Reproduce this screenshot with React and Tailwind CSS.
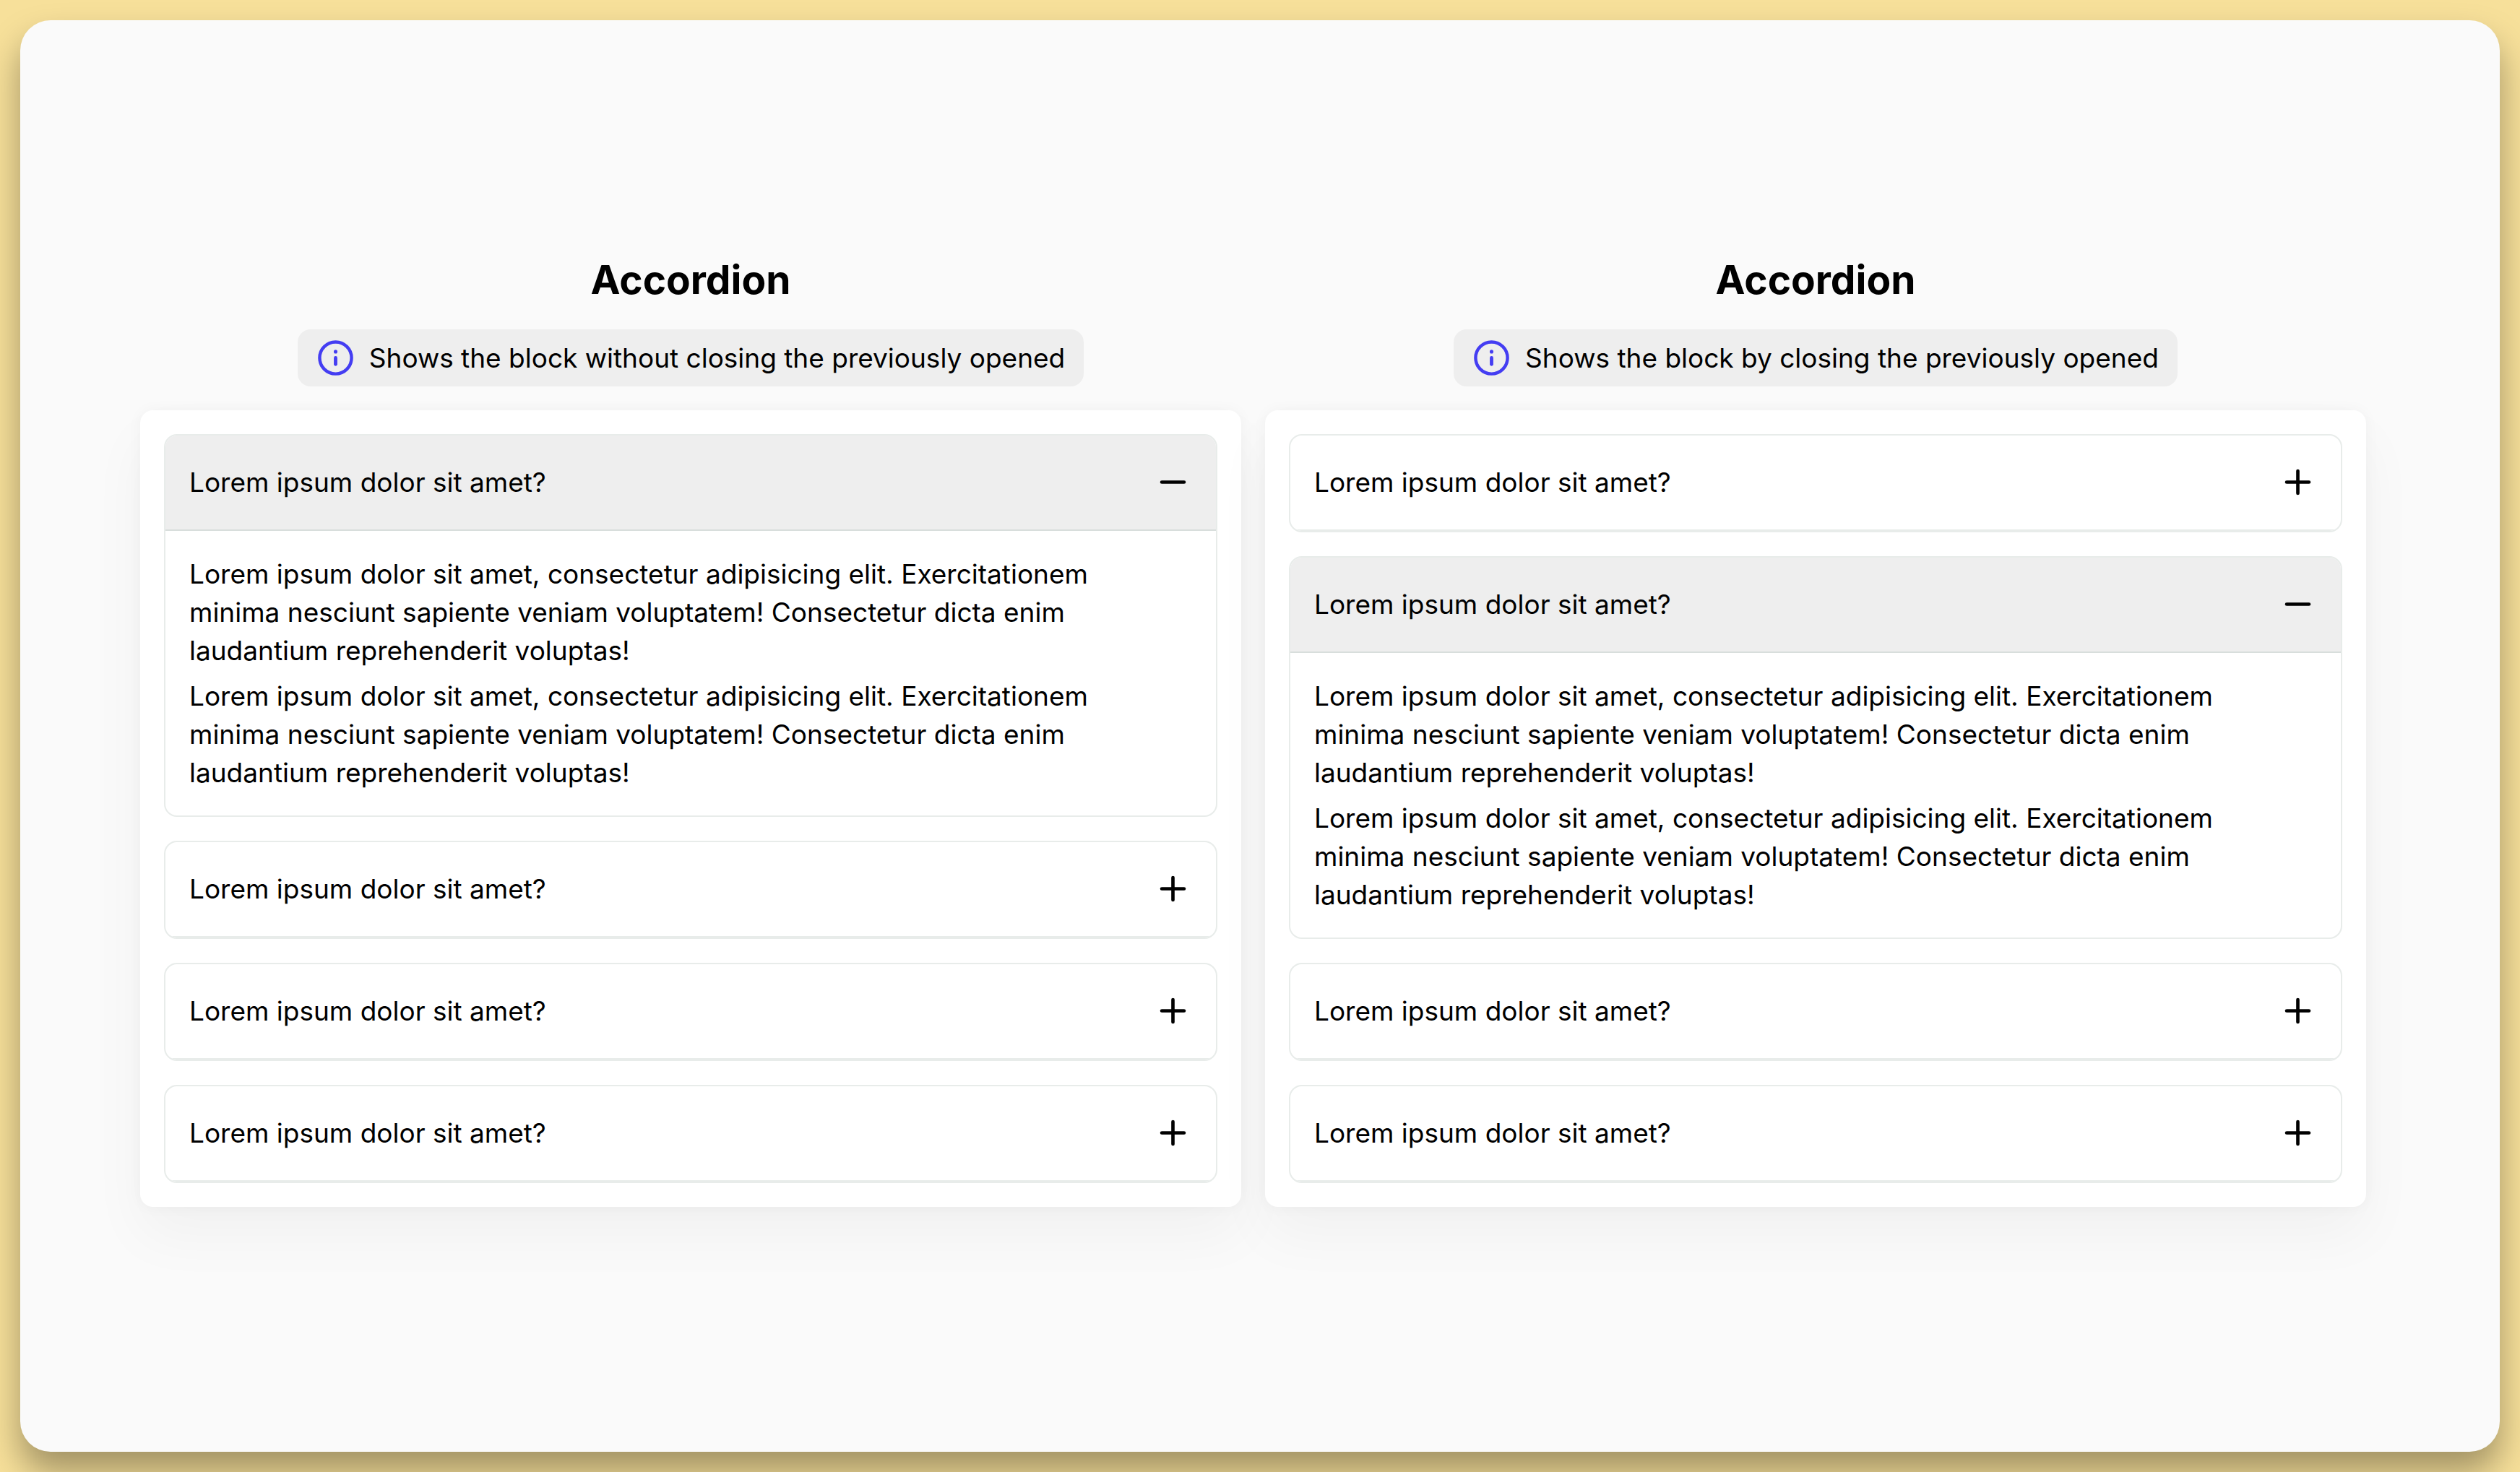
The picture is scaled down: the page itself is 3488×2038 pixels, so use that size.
import { useState } from "react";

const PARAGRAPH =
  "Lorem ipsum dolor sit amet, consectetur adipisicing elit. Exercitationem minima nesciunt sapiente veniam voluptatem! Consectetur dicta enim laudantium reprehenderit voluptas!";

const ITEMS = [0, 1, 2, 3];

function InfoIcon() {
  return (
    <svg viewBox="0 0 24 24" fill="none" className="size-[53px] shrink-0 text-[#443df2]" aria-hidden="true">
      <circle cx="12" cy="12" r="10" stroke="currentColor" strokeWidth="2" />
      <path d="M12 12v4" stroke="currentColor" strokeWidth="2.2" strokeLinecap="round" />
      <circle cx="12" cy="8.1" r="1.15" fill="currentColor" />
    </svg>
  );
}

function ToggleIcon({ open }) {
  return (
    <svg
      viewBox="0 0 24 24"
      fill="none"
      stroke="currentColor"
      strokeWidth="2.1"
      strokeLinecap="round"
      className="size-[53px] shrink-0"
      aria-hidden="true"
    >
      <path d="M5 12h14" />
      {!open && <path d="M12 5v14" />}
    </svg>
  );
}

function AccordionItem({ id, open, onToggle }) {
  return (
    <div className="overflow-hidden rounded-[18px] border-2 border-[#e8ecea]">
      <h3>
        <button
          type="button"
          id={`${id}-header`}
          aria-expanded={open}
          aria-controls={`${id}-panel`}
          onClick={onToggle}
          className={
            open
              ? "flex h-[132px] w-full items-center justify-between border-b-2 border-[#d8dedc] bg-[#eeeeee] px-[33px] text-left"
              : "flex h-[132px] w-full items-center justify-between border-b-2 border-[#e8ecea] px-[33px] text-left"
          }
        >
          <span>Lorem ipsum dolor sit amet?</span>
          <ToggleIcon open={open} />
        </button>
      </h3>
      {open && (
        <div
          id={`${id}-panel`}
          role="region"
          aria-labelledby={`${id}-header`}
          className="flex flex-col gap-[10px] py-[33px] pr-[100px] pl-[33px]"
        >
          <p>{PARAGRAPH}</p>
          <p>{PARAGRAPH}</p>
        </div>
      )}
    </div>
  );
}

function Accordion({ name, hint, initial, single }) {
  const [opened, setOpened] = useState([initial]);

  const toggle = (i) =>
    setOpened((current) => {
      if (current.includes(i)) return current.filter((n) => n !== i);
      return single ? [i] : [...current, i];
    });

  return (
    <section className="flex min-w-0 flex-1 flex-col items-center">
      <h2 className="text-[55px] leading-[80px] font-bold">Accordion</h2>
      <p className="mt-[29px] flex items-center gap-[20px] rounded-[18px] bg-[#eeeeee] px-[26px] py-[13px]">
        <InfoIcon />
        <span>{hint}</span>
      </p>
      <div className="mt-[33px] flex w-full flex-col gap-[33px] rounded-[18px] bg-white p-[33px] shadow-[0_40px_80px_rgba(0,0,0,0.04),0_0_20px_rgba(0,0,0,0.04)]">
        {ITEMS.map((i) => (
          <AccordionItem key={i} id={`${name}-${i}`} open={opened.includes(i)} onToggle={() => toggle(i)} />
        ))}
      </div>
    </section>
  );
}

export default function App() {
  return (
    <div className="flex min-h-screen bg-[#f7e09a] p-[28px] font-['Inter',sans-serif] text-[37px] leading-[53px] text-black">
      <main className="flex flex-1 items-center gap-[33px] rounded-[42px] bg-[#fafafa] pr-[185px] pb-[21px] pl-[166px] shadow-[0_28px_48px_rgba(0,0,0,0.35)]">
        <Accordion name="multi" hint="Shows the block without closing the previously opened" initial={0} />
        <Accordion name="single" hint="Shows the block by closing the previously opened" initial={1} single />
      </main>
    </div>
  );
}
